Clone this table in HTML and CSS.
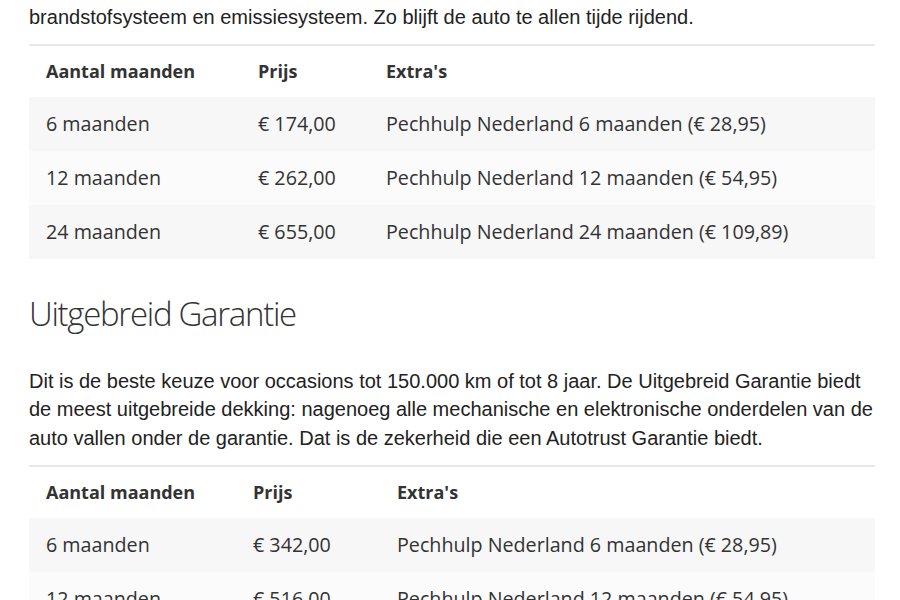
FILE: index.html
```html
<!DOCTYPE html>
<html lang="nl">
<head>
<meta charset="utf-8">
<title>Autotrust Garantie</title>
<link rel="stylesheet" href="styles.css">
</head>
<body>
<main class="content">
  <p class="text first">brandstofsysteem en emissiesysteem. Zo blijft de auto te allen tijde rijdend.</p>
  <table class="prices prices-a">
    <colgroup><col class="c1"><col class="c2"><col class="c3"></colgroup>
    <thead>
      <tr><th>Aantal maanden</th><th>Prijs</th><th>Extra's</th></tr>
    </thead>
    <tbody>
      <tr><td>6 maanden</td><td>€ 174,00</td><td>Pechhulp Nederland 6 maanden (€ 28,95)</td></tr>
      <tr><td>12 maanden</td><td>€ 262,00</td><td>Pechhulp Nederland 12 maanden (€ 54,95)</td></tr>
      <tr><td>24 maanden</td><td>€ 655,00</td><td>Pechhulp Nederland 24 maanden (€ 109,89)</td></tr>
    </tbody>
  </table>

  <h2 class="title">Uitgebreid Garantie</h2>
  <p class="text second">Dit is de beste keuze voor occasions tot 150.000 km of tot 8 jaar. De Uitgebreid Garantie biedt de meest uitgebreide dekking: nagenoeg alle mechanische en elektronische onderdelen van de auto vallen onder de garantie. Dat is de zekerheid die een Autotrust Garantie biedt.</p>
  <table class="prices prices-b">
    <colgroup><col class="c1"><col class="c2"><col class="c3"></colgroup>
    <thead>
      <tr><th>Aantal maanden</th><th>Prijs</th><th>Extra's</th></tr>
    </thead>
    <tbody>
      <tr><td>6 maanden</td><td>€ 342,00</td><td>Pechhulp Nederland 6 maanden (€ 28,95)</td></tr>
      <tr><td>12 maanden</td><td>€ 516,00</td><td>Pechhulp Nederland 12 maanden (€ 54,95)</td></tr>
      <tr><td>24 maanden</td><td>€ 1.032,00</td><td>Pechhulp Nederland 24 maanden (€ 109,89)</td></tr>
    </tbody>
  </table>
</main>
</body>
</html>
```

FILE: styles.css
```css
html, body {
  margin: 0;
  padding: 0;
  background: #ffffff;
}

.content {
  width: 846px;
  margin: 0 0 0 29px;
  padding-top: 3px;
}

.text {
  font-family: "Liberation Sans", Arial, sans-serif;
  font-size: 20px;
  line-height: 28.5px;
  color: #222222;
  margin: 0 0 12px;
}

.text.second {
  margin-bottom: 13px;
}

.prices {
  width: 100%;
  border-collapse: collapse;
  border-spacing: 0;
  table-layout: fixed;
  font-family: "Open Sans", "Noto Sans", sans-serif;
  font-size: 19.7px;
  color: #333333;
  margin: 0;
}

.prices-a .c1 { width: 212px; }
.prices-a .c2 { width: 128px; }
.prices-b .c1 { width: 207px; }
.prices-b .c2 { width: 144px; }

.prices th {
  text-align: left;
  font-weight: 700;
  font-size: 18px;
  line-height: 24px;
  padding: 13px 17px 14px;
  border-top: 2px solid #e8e8e8;
  color: #333333;
}

.prices td {
  line-height: 24px;
  padding: 15px 17px;
  white-space: nowrap;
}

.prices tbody tr:nth-child(odd) {
  background: #f7f7f7;
}

.prices tbody tr:nth-child(even) {
  background: #fbfbfb;
}

.title {
  font-family: "Open Sans", "Noto Sans", sans-serif;
  font-weight: 300;
  font-size: 33px;
  line-height: 40px;
  letter-spacing: -1.3px;
  color: #333333;
  margin: 35px 0 33px;
}
```
